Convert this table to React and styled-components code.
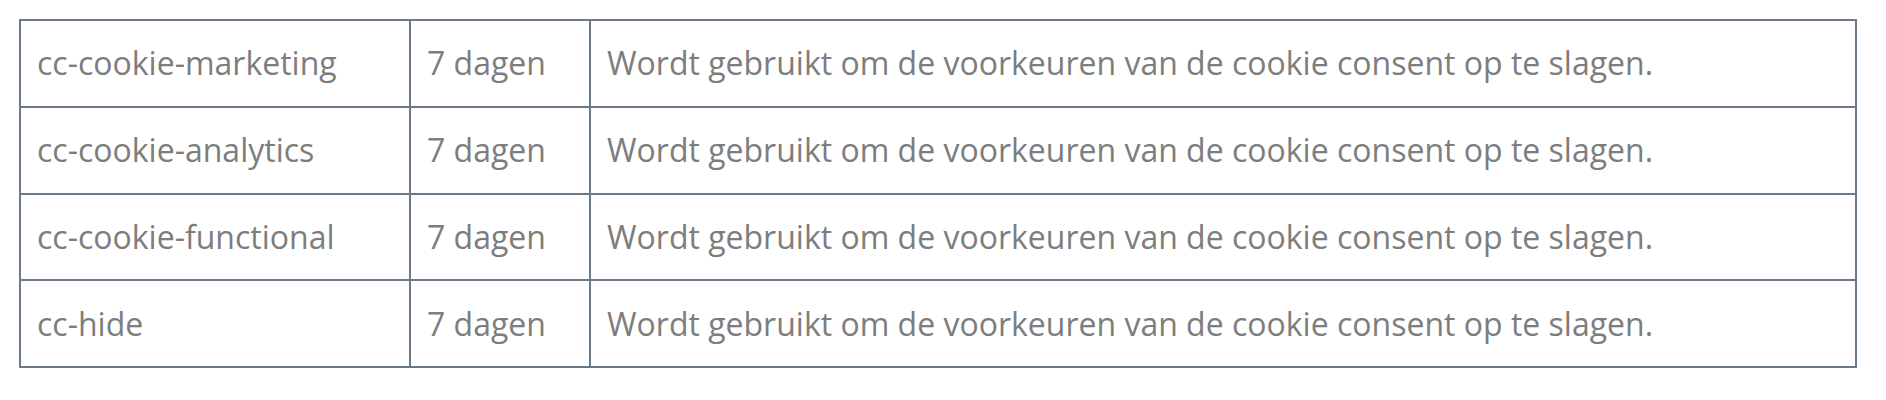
import styled, { createGlobalStyle } from "styled-components";

const cookies = [
  { name: "cc-cookie-marketing", duration: "7 dagen" },
  { name: "cc-cookie-analytics", duration: "7 dagen" },
  { name: "cc-cookie-functional", duration: "7 dagen" },
  { name: "cc-hide", duration: "7 dagen" },
];

const description =
  "Wordt gebruikt om de voorkeuren van de cookie consent op te slagen.";

const App = () => {
  return (
    <>
      <GlobalStyle />
      <Page>
        <CookieTable>
          <colgroup>
            <col style={{ width: "390px" }} />
            <col style={{ width: "180px" }} />
            <col />
          </colgroup>
          <tbody>
            {cookies.map((cookie) => (
              <Row key={cookie.name}>
                <Cell>{cookie.name}</Cell>
                <Cell>{cookie.duration}</Cell>
                <Cell>{description}</Cell>
              </Row>
            ))}
          </tbody>
        </CookieTable>
      </Page>
    </>
  );
};

const GlobalStyle = createGlobalStyle`
  body {
    margin: 0;
    background: #ffffff;
    font-family: "Open Sans", "Noto Sans", sans-serif;
  }
`;

const Page = styled.div`
  padding: 19px 28px 0 19px;
`;

const CookieTable = styled.table`
  width: 1838px;
  border-collapse: collapse;
  table-layout: fixed;
  border: 2px solid #6b7a89;
`;

const Row = styled.tr`
  border-bottom: 2px solid #6b7a89;
`;

const Cell = styled.td`
  padding: 18.4px 16px;
  border: 2px solid #6b7a89;
  font-size: 32px;
  line-height: 48px;
  color: #7d7d7d;
  text-align: left;
  vertical-align: middle;
  white-space: nowrap;
`;

export default App;
